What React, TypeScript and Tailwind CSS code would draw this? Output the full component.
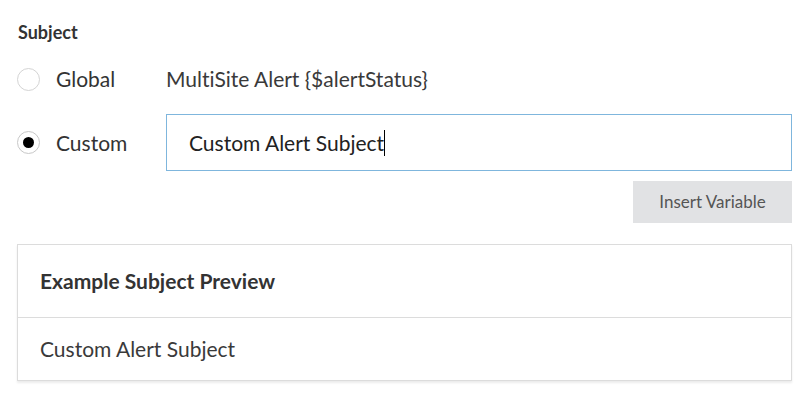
import React from "react";

export default function App() {
  return (
    <div className="w-[807px] h-[399px] bg-white text-[#333] pl-[17px] pr-[15px] pt-[20px] [font-variant-ligatures:none]" style={{ fontFamily: "Lato, 'Open Sans', sans-serif" }}>
      <div className="text-[18px] font-bold leading-[24px] ml-[1px]">Subject</div>
      <div className="flex items-center h-[44px] mt-[13px]">
        <div className="w-[147px] flex items-center">
          <span className="w-[23px] h-[23px] rounded-full border border-[#d4d4d4] bg-white" />
          <span className="ml-[16px] text-[21px] leading-[28px]">Global</span>
        </div>
        <span className="text-[21px] leading-[28px] text-[#3a3a3a] ml-[2px]">MultiSite Alert {"{$alertStatus}"}</span>
      </div>
      <div className="flex items-center mt-[13px]">
        <div className="w-[149px] flex items-center">
          <span className="w-[23px] h-[23px] rounded-full border border-[#c8c8c8] bg-white flex items-center justify-center">
            <span className="w-[11px] h-[11px] rounded-full bg-black" />
          </span>
          <span className="ml-[16px] text-[21px] leading-[28px]">Custom</span>
        </div>
        <div className="flex-1 h-[57px] border border-[#7fb6dd] flex items-center pl-[22px] text-[21px] leading-[28px] text-[#222]">
          Custom Alert Subject<span className="inline-block w-[1px] h-[26px] bg-black" />
        </div>
      </div>
      <div className="flex justify-end mt-[10px]">
        <button className="w-[159px] h-[42px] bg-[#e1e2e4] text-[#555] text-[17px]">Insert Variable</button>
      </div>
      <div className="mt-[21px] border border-[#dcdcdc] shadow-[0_2px_2px_rgba(0,0,0,0.08)] bg-white">
        <div className="h-[73px] flex items-center px-[22px] text-[21px] font-bold border-b border-[#dcdcdc]">Example Subject Preview</div>
        <div className="h-[62px] flex items-center px-[22px] text-[21px] text-[#3a3a3a]">Custom Alert Subject</div>
      </div>
    </div>
  );
}
